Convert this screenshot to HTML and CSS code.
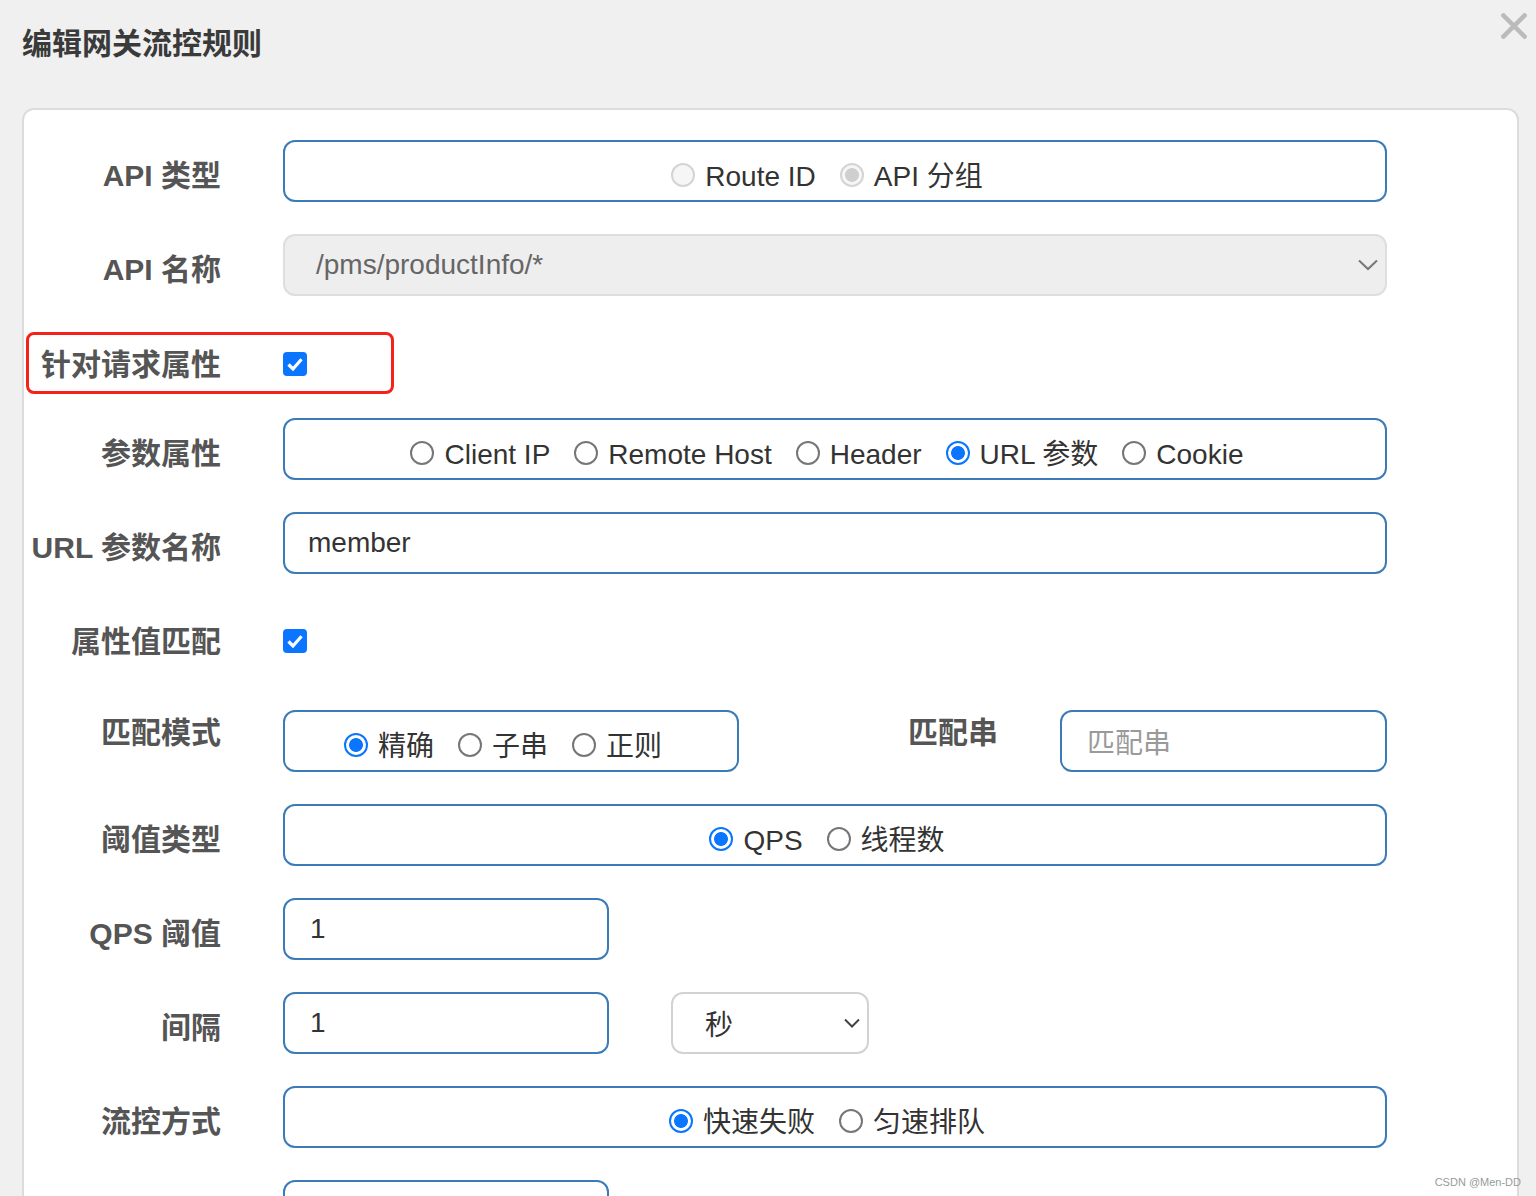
FILE: index.html
```html
<!DOCTYPE html>
<html lang="zh-CN">
<head>
<meta charset="utf-8">
<title>编辑网关流控规则</title>
<link rel="stylesheet" href="styles.css">
</head>
<body>
<div class="dialog">
  <div class="header">
    <h1 class="title">编辑网关流控规则</h1>
    <svg class="close" width="26" height="26" viewBox="0 0 26 26"><path d="M2.5 2.5 L23.5 23.5 M23.5 2.5 L2.5 23.5" stroke="#bbb" stroke-width="4.5" stroke-linecap="square" fill="none"/></svg>
  </div>
  <div class="panel">
    <div class="row">
      <div class="label">API 类型</div>
      <div class="box wide radios">
        <label class="opt"><input type="radio" class="radio" disabled>Route ID</label>
        <label class="opt"><input type="radio" class="radio" checked disabled>API 分组</label>
      </div>
    </div>
    <div class="row">
      <div class="label">API 名称</div>
      <div class="select wide disabled-select">
        <span>/pms/productInfo/*</span>
        <svg class="chev" width="20" height="12" viewBox="0 0 20 12"><path d="M1 1.5 L10 10 L19 1.5" stroke="#777" stroke-width="2" fill="none"/></svg>
      </div>
    </div>
    <div class="row row-check1">
      <div class="label flat">针对请求属性</div>
      <span class="check"><svg width="24" height="24" viewBox="0 0 24 24"><rect width="24" height="24" rx="4" fill="#0a75ff"/><path d="M5.5 12.5 L10 17 L18.5 7.2" stroke="#fff" stroke-width="3.2" fill="none"/></svg></span>
    </div>
    <div class="row">
      <div class="label">参数属性</div>
      <div class="box wide radios">
        <label class="opt"><input type="radio" class="radio">Client IP</label>
        <label class="opt"><input type="radio" class="radio">Remote Host</label>
        <label class="opt"><input type="radio" class="radio">Header</label>
        <label class="opt"><input type="radio" class="radio" checked>URL 参数</label>
        <label class="opt"><input type="radio" class="radio">Cookie</label>
      </div>
    </div>
    <div class="row">
      <div class="label">URL 参数名称</div>
      <div class="box wide text">member</div>
    </div>
    <div class="row row-check2">
      <div class="label flat">属性值匹配</div>
      <span class="check"><svg width="24" height="24" viewBox="0 0 24 24"><rect width="24" height="24" rx="4" fill="#0a75ff"/><path d="M5.5 12.5 L10 17 L18.5 7.2" stroke="#fff" stroke-width="3.2" fill="none"/></svg></span>
    </div>
    <div class="row">
      <div class="label up">匹配模式</div>
      <div class="box mid radios">
        <label class="opt"><input type="radio" class="radio" checked>精确</label>
        <label class="opt"><input type="radio" class="radio">子串</label>
        <label class="opt"><input type="radio" class="radio">正则</label>
      </div>
      <div class="label inline up">匹配串</div>
      <div class="box small text placeholder">匹配串</div>
    </div>
    <div class="row">
      <div class="label">阈值类型</div>
      <div class="box wide radios">
        <label class="opt"><input type="radio" class="radio" checked>QPS</label>
        <label class="opt"><input type="radio" class="radio">线程数</label>
      </div>
    </div>
    <div class="row">
      <div class="label">QPS 阈值</div>
      <div class="box short text num">1</div>
    </div>
    <div class="row">
      <div class="label">间隔</div>
      <div class="box short text num">1</div>
      <div class="select unit">
        <span>秒</span>
        <svg class="chev" width="16" height="10" viewBox="0 0 16 10"><path d="M1 1.5 L8 8.5 L15 1.5" stroke="#444" stroke-width="2" fill="none"/></svg>
      </div>
    </div>
    <div class="row">
      <div class="label">流控方式</div>
      <div class="box wide radios">
        <label class="opt"><input type="radio" class="radio" checked>快速失败</label>
        <label class="opt"><input type="radio" class="radio">匀速排队</label>
      </div>
    </div>
    <div class="row">
      <div class="label"></div>
      <div class="box short"></div>
    </div>
  </div>
  <div class="annot"></div>
  <div class="watermark">CSDN @Men-DD</div>
</div>
</body>
</html>
```

FILE: styles.css
```css
html, body {
  margin: 0;
  padding: 0;
  background: #f0f0f0;
  height: 1196px;
  overflow: hidden;
}
body {
  font-family: "Liberation Sans", "Noto Sans CJK SC", sans-serif;
  color: #333;
}
.dialog {
  position: relative;
  height: 1196px;
}
.header {
  display: flex;
  justify-content: space-between;
  align-items: flex-start;
  height: 108px;
  box-sizing: border-box;
  padding: 26px 9px 0 22px;
}
.title {
  margin: 0;
  font-size: 30px;
  line-height: 36px;
  font-weight: bold;
  color: #3a3a3a;
}
.close {
  margin-top: -13px;
}
.panel {
  display: flex;
  flex-direction: column;
  margin: 0 17px 0 22px;
  height: 1088px;
  box-sizing: border-box;
  background: #fff;
  border: 2px solid #dcdcdc;
  border-bottom: none;
  border-radius: 12px 12px 0 0;
  padding-top: 30px;
  overflow: hidden;
}
.row {
  display: flex;
  align-items: center;
  flex: none;
  height: 62px;
  margin-bottom: 32px;
}
.row-check1 {
  margin-top: 5px;
  margin-bottom: 23px;
}
.row-check2 {
  margin-top: 4px;
  margin-bottom: 38px;
}
.label {
  width: 197px;
  flex: none;
  margin-right: 62px;
  text-align: right;
  white-space: nowrap;
  font-size: 30px;
  line-height: 36px;
  font-weight: bold;
  color: #555;
  padding-top: 10px;
}
.label.flat {
  padding-top: 2px;
}
.label.up {
  padding-top: 0;
  padding-bottom: 16px;
}
.label.inline {
  width: auto;
  margin-left: 169px;
}
.box {
  box-sizing: border-box;
  height: 62px;
  border: 2px solid #3a7bb8;
  border-radius: 12px;
  background: #fff;
  flex: none;
}
.wide { width: 1104px; }
.mid { width: 456px; }
.small { width: 327px; }
.short { width: 326px; }
.radios {
  display: flex;
  align-items: center;
  justify-content: center;
  padding-top: 12px;
  gap: 8px;
}
.opt {
  display: inline-flex;
  align-items: center;
  font-size: 28px;
  line-height: 34px;
  color: #333;
  padding-right: 16px;
  white-space: nowrap;
}
.radio {
  appearance: none;
  -webkit-appearance: none;
  width: 24px;
  height: 24px;
  margin: 0 10px 0 0;
  border: 2px solid #767676;
  border-radius: 50%;
  background: #fff;
  box-sizing: border-box;
  flex: none;
  position: relative;
  top: -2px;
}
.radio:checked {
  border-color: #0a75ff;
  background: radial-gradient(circle, #0a75ff 0 6.5px, #fff 7.3px);
}
.radio:disabled {
  border-color: #d4d4d4;
  background: #f6f6f6;
}
.radio:disabled:checked {
  border-color: #d4d4d4;
  background: radial-gradient(circle, #cfcfcf 0 6.5px, #f6f6f6 7.3px);
}
.text {
  display: flex;
  align-items: center;
  padding-left: 23px;
  font-size: 28px;
  color: #333;
}
.text.num {
  padding-left: 25px;
}
.placeholder {
  color: #9a9a9a;
  padding-left: 25px;
}
.select {
  box-sizing: border-box;
  height: 62px;
  display: flex;
  align-items: center;
  justify-content: space-between;
  border-radius: 12px;
  font-size: 28px;
  flex: none;
}
.disabled-select {
  background: #eeeeee;
  border: 2px solid #dedede;
  color: #666;
  padding: 0 7px 0 31px;
}
.unit {
  width: 198px;
  margin-left: 62px;
  border: 2px solid #d2d2d2;
  background: #fff;
  color: #333;
  padding: 0 7px 0 32px;
}
.check {
  display: block;
  width: 24px;
  height: 24px;
}
.check svg {
  display: block;
}
.annot {
  position: absolute;
  left: 26px;
  top: 332px;
  width: 368px;
  height: 62px;
  box-sizing: border-box;
  border: 3.5px solid #f5221b;
  border-radius: 8px;
}
.watermark {
  position: absolute;
  right: 15px;
  top: 1175px;
  font-size: 11px;
  line-height: 14px;
  color: #9a9a9a;
}
```
